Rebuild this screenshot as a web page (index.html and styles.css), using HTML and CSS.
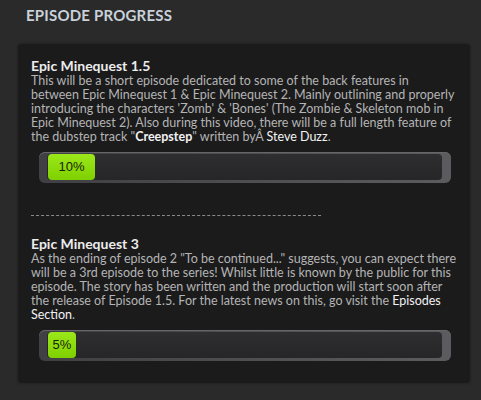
FILE: index.html
```html
<!DOCTYPE html>
<html>
    <head>
        <title>episode progress</title>
        <link rel="stylesheet" href="styles.css">
    </head>
    <body>
        <h3 class="heading">EPISODE PROGRESS</h3>
        <div class="panel">
            <div class="episode">
                <div class="ep-title">Epic Minequest 1.5</div>
                <p class="ep-text">This will be a short episode dedicated to some of the back features in between Epic Minequest 1 &amp; Epic Minequest 2. Mainly outlining and properly introducing the characters 'Zomb' &amp; 'Bones' (The Zombie &amp; Skeleton mob in Epic Minequest 2). Also during this video, there will be a full length feature of the dubstep track "<b>Creepstep</b>" written byÂ <span class="hl">Steve Duzz</span>.</p>
                <div class="bar">
                    <div class="track">
                        <div class="fill" style="width:47px">10%</div>
                    </div>
                </div>
            </div>
            <div class="divider"></div>
            <div class="episode">
                <div class="ep-title">Epic Minequest 3</div>
                <p class="ep-text">As the ending of episode 2 "To be continued..." suggests, you can expect there will be a 3rd episode to the series! Whilst little is known by the public for this episode. The story has been written and the production will start soon after the release of Episode 1.5. For the latest news on this, go visit the <span class="hl">Episodes Section</span>.</p>
                <div class="bar">
                    <div class="track">
                        <div class="fill" style="width:28px">5%</div>
                    </div>
                </div>
            </div>
        </div>
    </body>
</html>
```
FILE: styles.css
```css
body{
    margin:0;
    background-color:#2a2a2b;
    font-family:"Lato","DejaVu Sans",sans-serif;
    width:481px;
    height:400px;
    overflow:hidden;
}
.heading{
    margin:0;
    padding:6px 0 0 26px;
    height:44px;
    box-sizing:border-box;
    font-size:15px;
    font-weight:bold;
    color:#c9d1d9;
    letter-spacing:0.2px;
}
.panel{
    margin-left:18px;
    width:452px;
    height:339px;
    box-sizing:border-box;
    background-color:#1b1b1c;
    border-radius:4px;
    padding:14px 14px 0 13px;
    box-shadow:0 0 3px rgba(0,0,0,0.4);
}
.ep-title{
    font-size:14px;
    font-weight:bold;
    color:#ececec;
    line-height:16px;
}
.ep-text{
    margin:0;
    font-size:12.5px;
    line-height:14px;
    color:#b4b4b4;
}
.ep-text b{
    color:#f2f2f2;
}
.ep-text .hl{
    color:#f2f2f2;
}
.bar{
    margin:8px 5px 0 8px;
    padding:2px 9px 3px 8px;
    border-radius:6px;
    background:linear-gradient(to right,#404044,#5c5c60);
    box-shadow:inset 0 1px 0 #666669;
}
.track{
    height:26px;
    border-radius:4px;
    background:linear-gradient(#2e2e31,#262628);
}
.fill{
    height:26px;
    margin-left:1px;
    border-radius:4px;
    background:linear-gradient(#9be81a,#7fd000);
    color:#182200;
    font-family:"Liberation Sans",Arial,sans-serif;
    font-size:13px;
    line-height:26px;
    text-align:center;
}
.divider{
    margin:32px 0 0 0;
    width:290px;
    border-top:1px dashed #8a8a8a;
}
.episode + .divider + .episode{
    margin-top:20px;
}
```
